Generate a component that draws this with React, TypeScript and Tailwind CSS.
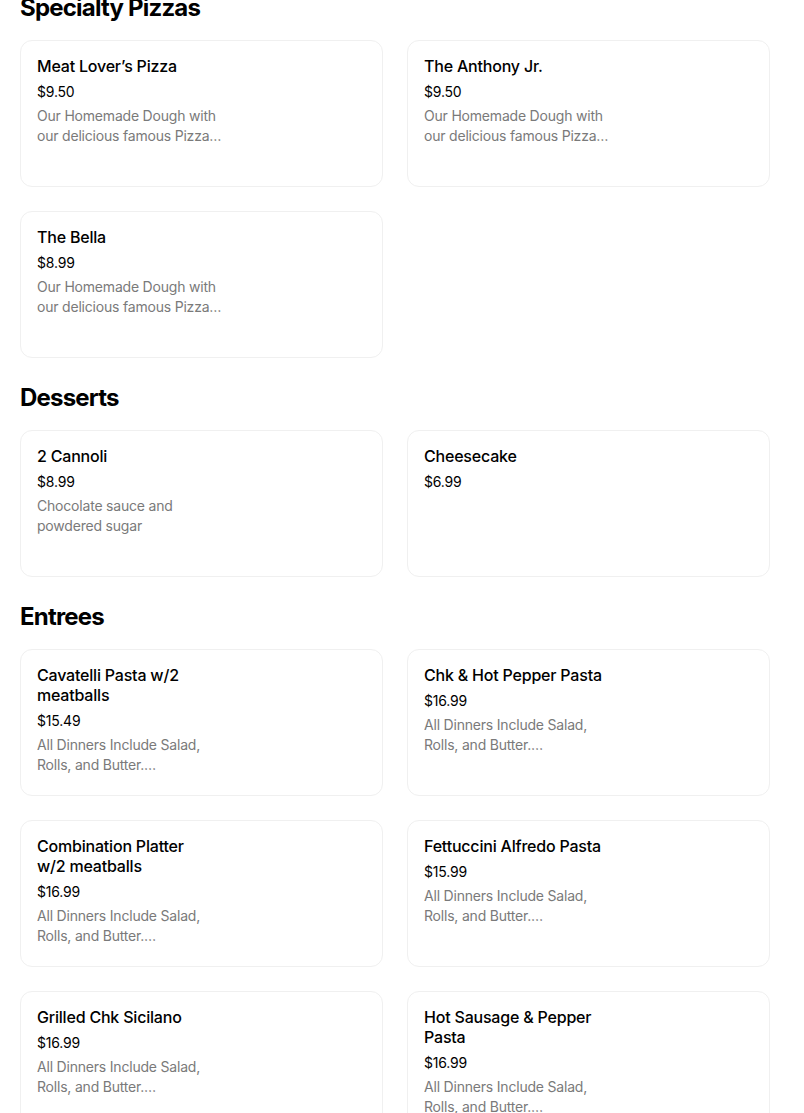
import React from "react";

type Item = { name: string; price: string; desc?: string };

const dinner = "All Dinners Include Salad,\nRolls, and Butter.\nSubstitute pasta available";

const sections: { title: string; items: Item[] }[] = [
  {
    title: "Specialty Pizzas",
    items: [
      { name: "Meat Lover\u2019s Pizza", price: "$9.50", desc: "Our Homemade Dough with our delicious famous Pizza sauce topped with pepperoni, sausage and bacon" },
      { name: "The Anthony Jr.", price: "$9.50", desc: "Our Homemade Dough with our delicious famous Pizza sauce topped with mozzarella cheese" },
      { name: "The Bella", price: "$8.99", desc: "Our Homemade Dough with our delicious famous Pizza sauce topped with fresh mozzarella" },
    ],
  },
  {
    title: "Desserts",
    items: [
      { name: "2 Cannoli", price: "$8.99", desc: "Chocolate sauce and powdered sugar" },
      { name: "Cheesecake", price: "$6.99" },
    ],
  },
  {
    title: "Entrees",
    items: [
      { name: "Cavatelli Pasta w/2 meatballs", price: "$15.49", desc: dinner },
      { name: "Chk & Hot Pepper Pasta", price: "$16.99", desc: dinner },
      { name: "Combination Platter\nw/2 meatballs", price: "$16.99", desc: dinner },
      { name: "Fettuccini Alfredo Pasta", price: "$15.99", desc: dinner },
      { name: "Grilled Chk Sicilano", price: "$16.99", desc: dinner },
      { name: "Hot Sausage & Pepper Pasta", price: "$16.99", desc: dinner },
    ],
  },
];

function Card({ item }: { item: Item }) {
  return (
    <div className="h-[147px] rounded-xl border border-[#f0f0f0] bg-white px-4 pt-[15px] pb-4">
      <div className="w-[186px]">
        <div className="text-[16px] leading-5 font-medium text-black tracking-[-0.2px] whitespace-pre-line">{item.name}</div>
        <div className="mt-[6px] text-[14px] leading-5 text-black tracking-[-0.2px]">{item.price}</div>
        {item.desc && (
          <div className="mt-1 text-[14px] leading-5 text-[#7a7a7a] line-clamp-2 whitespace-pre-line tracking-[-0.2px]">
            {item.desc}
          </div>
        )}
      </div>
    </div>
  );
}

export default function App() {
  return (
    <div className="min-h-screen bg-white" style={{ fontFamily: "Inter, 'Noto Sans', sans-serif" }}>
      <div className="mt-[-8px] w-[750px] ml-5">
        {sections.map((s, i) => (
          <section key={s.title} className={i === 0 ? "" : "pt-6"}>
            <h2 className="text-[24px] leading-8 font-bold text-black tracking-[-0.8px]">{s.title}</h2>
            <div className="mt-4 grid grid-cols-2 gap-6">
              {s.items.map((it) => (
                <Card key={it.name} item={it} />
              ))}
            </div>
          </section>
        ))}
      </div>
    </div>
  );
}
